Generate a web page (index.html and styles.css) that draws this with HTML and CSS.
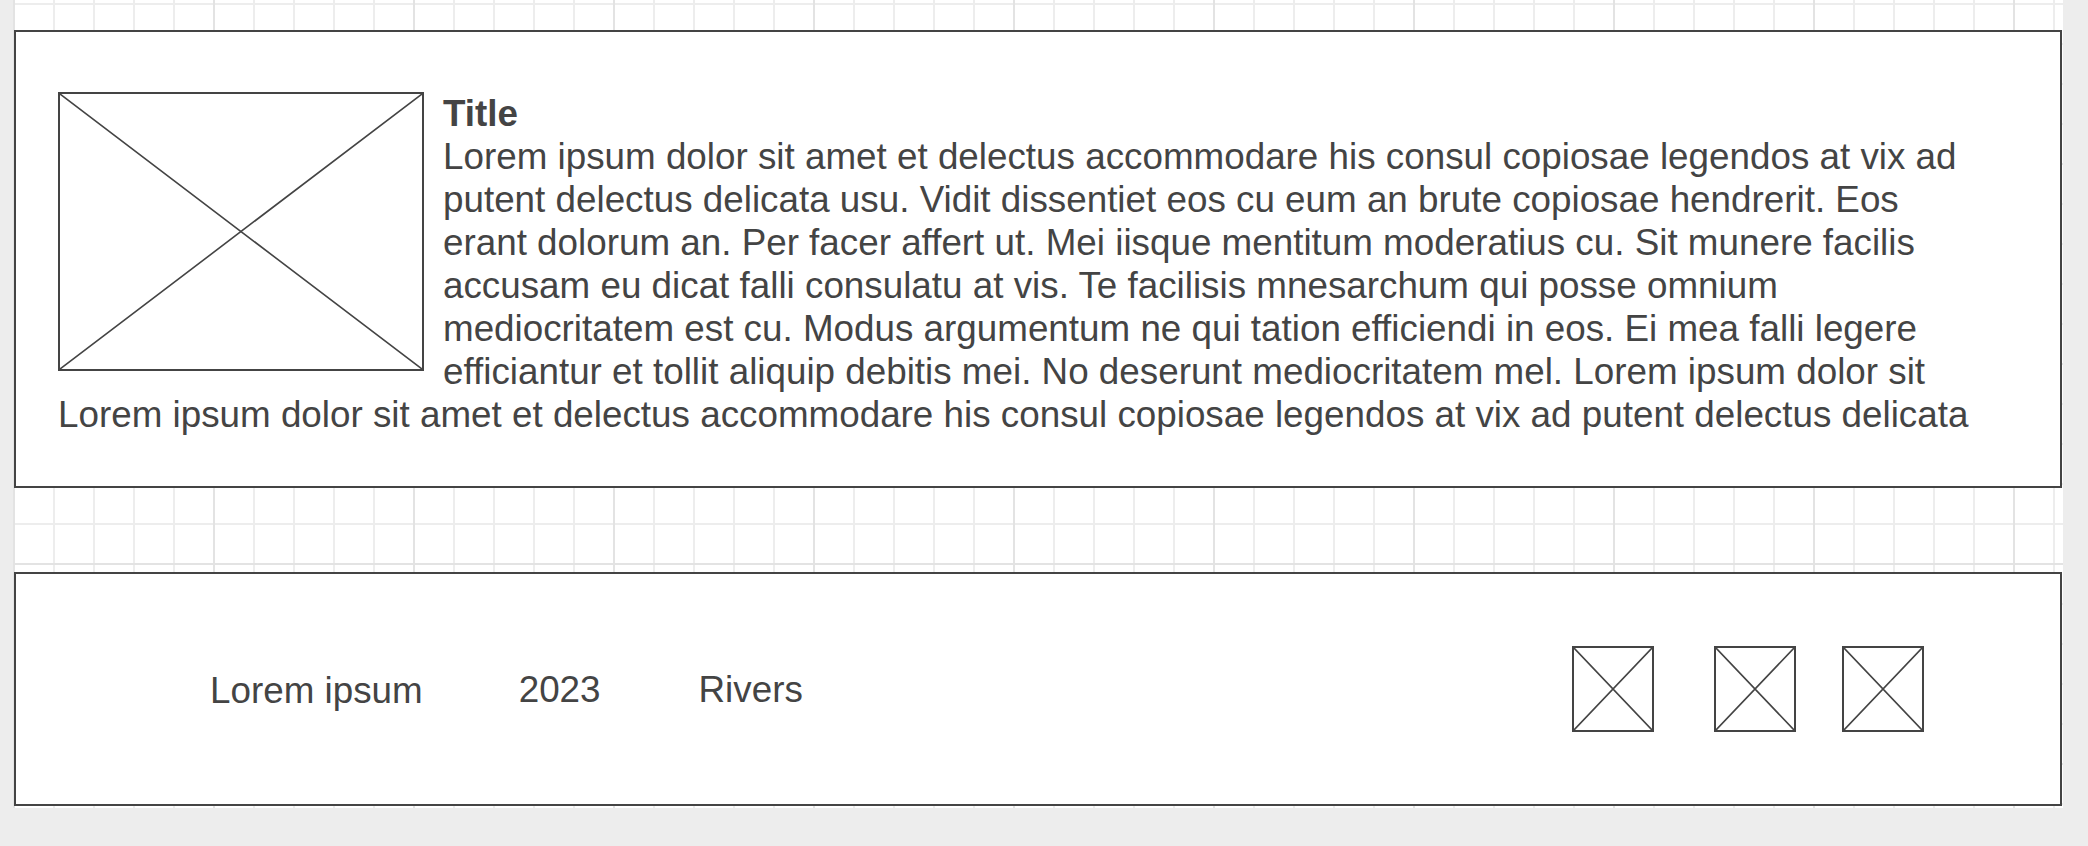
FILE: index.html
```html
<!DOCTYPE html>
<html lang="en">
<head>
<meta charset="utf-8">
<title>Wireframe</title>
<link rel="stylesheet" href="styles.css">
</head>
<body>
<div class="canvas">
  <section class="panel panel-article">
    <div class="article-row">
      <svg class="ph ph-large" viewBox="0 0 100 100" preserveAspectRatio="none" aria-hidden="true">
        <path d="M0 0L100 100M100 0L0 100"/>
      </svg>
      <div class="article-text">
        <h2 class="title">Title</h2>
        <p class="body">Lorem ipsum dolor sit amet et delectus accommodare his consul copiosae legendos at vix ad putent delectus delicata usu. Vidit dissentiet eos cu eum an brute copiosae hendrerit. Eos erant dolorum an. Per facer affert ut. Mei iisque mentitum moderatius cu. Sit munere facilis accusam eu dicat falli consulatu at vis. Te facilisis mnesarchum qui posse omnium mediocritatem est cu. Modus argumentum ne qui tation efficiendi in eos. Ei mea falli legere efficiantur et tollit aliquip debitis mei. No deserunt mediocritatem mel. Lorem ipsum dolor sit</p>
      </div>
    </div>
    <p class="body body-full">Lorem ipsum dolor sit amet et delectus accommodare his consul copiosae legendos at vix ad putent delectus delicata</p>
  </section>
  <section class="panel panel-meta">
    <div class="meta-text">
      <span class="meta meta-name">Lorem ipsum</span>
      <span class="meta meta-year">2023</span>
      <span class="meta meta-place">Rivers</span>
    </div>
    <div class="meta-icons">
      <svg class="ph ph-small ph-a" viewBox="0 0 100 100" preserveAspectRatio="none" aria-hidden="true"><path d="M0 0L100 100M100 0L0 100"/></svg>
      <svg class="ph ph-small ph-b" viewBox="0 0 100 100" preserveAspectRatio="none" aria-hidden="true"><path d="M0 0L100 100M100 0L0 100"/></svg>
      <svg class="ph ph-small ph-c" viewBox="0 0 100 100" preserveAspectRatio="none" aria-hidden="true"><path d="M0 0L100 100M100 0L0 100"/></svg>
    </div>
  </section>
</div>
</body>
</html>
```
FILE: styles.css
```css
html, body {
  margin: 0;
  padding: 0;
}

body {
  background: #ededed;
  font-family: "Liberation Sans", Arial, sans-serif;
  color: #444444;
  width: 2088px;
  height: 846px;
  overflow: hidden;
}

.canvas {
  margin-left: 13px;
  width: 2050px;
  height: 808px;
  box-sizing: border-box;
  padding: 30px 1px 0 1px;
  background-color: #ffffff;
  background-image:
    linear-gradient(to right, #e3e3e3 2px, transparent 2px),
    linear-gradient(to bottom, #e3e3e3 2px, transparent 2px),
    linear-gradient(to right, #ededed 2px, transparent 2px),
    linear-gradient(to bottom, #ededed 2px, transparent 2px);
  background-size: 200px 200px, 200px 200px, 40px 40px, 40px 40px;
  background-position: 0 163px, 0 163px, 0 3px, 0 3px;
}

.panel {
  box-sizing: border-box;
  border: 2px solid #444444;
  background: #ffffff;
}

.panel-article {
  height: 458px;
  padding: 60px 80px 0 42px;
}

.article-row {
  display: flex;
  align-items: flex-start;
  gap: 19px;
}

.ph {
  display: block;
  box-sizing: border-box;
  border: 2px solid #444444;
  background: #ffffff;
  flex: none;
}

.ph path {
  fill: none;
  stroke: #444444;
  stroke-width: 1.6;
  vector-effect: non-scaling-stroke;
}

.ph-large {
  width: 366px;
  height: 279px;
}

.article-text {
  flex: 1;
  min-width: 0;
}

.title {
  margin: 0;
  font-size: 36.8px;
  line-height: 43px;
  font-weight: bold;
}

.body {
  margin: 0;
  font-size: 36.8px;
  line-height: 43px;
}

.panel-meta {
  margin-top: 84px;
  height: 234px;
  display: flex;
  align-items: center;
  padding: 0 136px 0 194px;
}

.meta-text {
  display: flex;
  align-items: center;
  font-size: 36.8px;
  line-height: 43px;
}

.meta-name {
  position: relative;
  top: 1px;
}

.meta-year {
  margin-left: 96px;
}

.meta-place {
  margin-left: 98px;
}

.meta-icons {
  margin-left: auto;
  display: flex;
  align-items: center;
}

.ph-small {
  width: 82px;
  height: 86px;
}

.ph-b {
  margin-left: 60px;
}

.ph-c {
  margin-left: 46px;
}
```
